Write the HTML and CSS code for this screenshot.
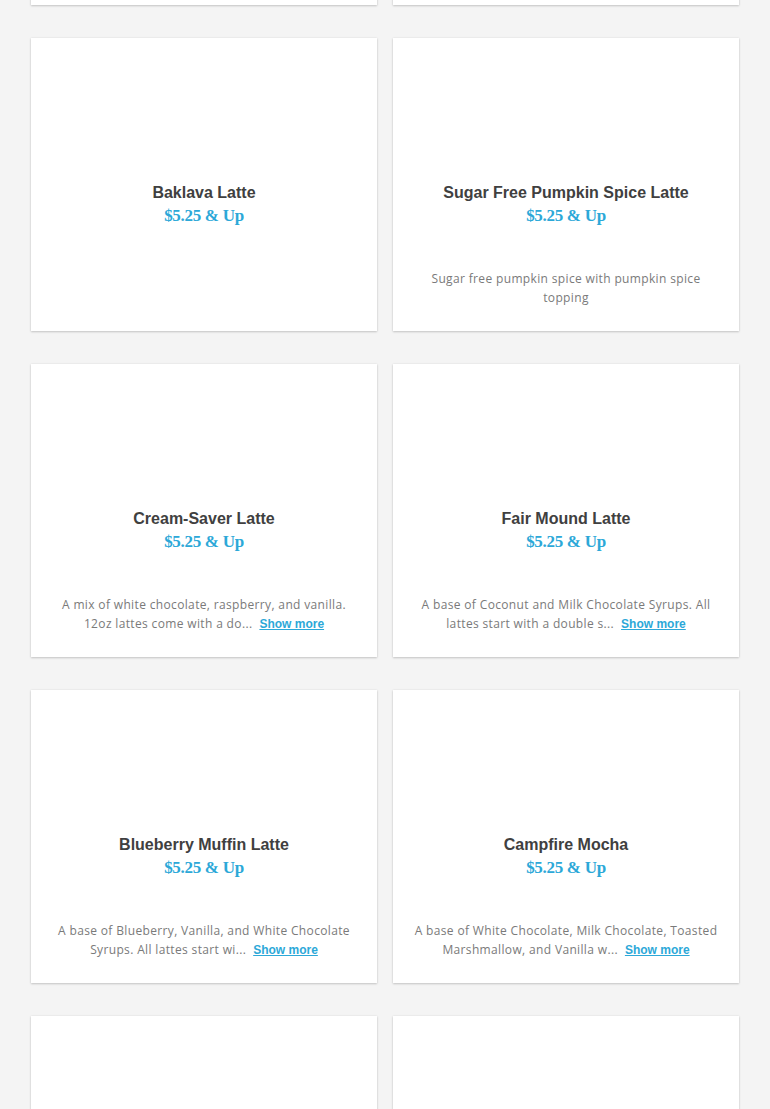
FILE: index.html
```html
<!DOCTYPE html>
<html lang="en">
<head>
  <meta charset="UTF-8" />
  <meta name="viewport" content="width=device-width, initial-scale=1.0" />
  <title>Lattes</title>
  <link rel="stylesheet" href="styles.css">
</head>
<body>
  <div class="menu">
    <div class="item"></div>
    <div class="item"></div>

    <div class="item">
      <div class="photo"></div>
      <h3 class="name">Baklava Latte</h3>
      <div class="price">$5.25 &amp; Up</div>
    </div>
    <div class="item">
      <div class="photo"></div>
      <h3 class="name">Sugar Free Pumpkin Spice Latte</h3>
      <div class="price">$5.25 &amp; Up</div>
      <p class="desc">Sugar free pumpkin spice with pumpkin spice topping</p>
    </div>

    <div class="item">
      <div class="photo"></div>
      <h3 class="name">Cream-Saver Latte</h3>
      <div class="price">$5.25 &amp; Up</div>
      <p class="desc">A mix of white chocolate, raspberry, and vanilla. 12oz lattes come with a do...<a href="#" class="more">Show more</a></p>
    </div>
    <div class="item">
      <div class="photo"></div>
      <h3 class="name">Fair Mound Latte</h3>
      <div class="price">$5.25 &amp; Up</div>
      <p class="desc">A base of Coconut and Milk Chocolate Syrups. All lattes start with a double s...<a href="#" class="more">Show more</a></p>
    </div>

    <div class="item">
      <div class="photo"></div>
      <h3 class="name">Blueberry Muffin Latte</h3>
      <div class="price">$5.25 &amp; Up</div>
      <p class="desc">A base of Blueberry, Vanilla, and White Chocolate Syrups. All lattes start wi...<a href="#" class="more">Show more</a></p>
    </div>
    <div class="item">
      <div class="photo"></div>
      <h3 class="name">Campfire Mocha</h3>
      <div class="price">$5.25 &amp; Up</div>
      <p class="desc">A base of White Chocolate, Milk Chocolate, Toasted Marshmallow, and Vanilla w...<a href="#" class="more">Show more</a></p>
    </div>

    <div class="item"></div>
    <div class="item"></div>
  </div>
</body>
</html>
```

FILE: styles.css
```css
body {
  margin: 0;
  background-color: #f4f4f4;
  font-family: "Open Sans", sans-serif;
}
.menu {
  display: grid;
  grid-template-columns: 346px 346px;
  grid-auto-rows: 293px;
  column-gap: 16px;
  row-gap: 33px;
  justify-content: center;
  margin-top: -288px;
}
.item {
  background: #fff;
  box-shadow: 0 1px 2px rgba(0, 0, 0, 0.18), 0 0 2px rgba(0, 0, 0, 0.08);
  padding: 0 16px;
  text-align: center;
  overflow: hidden;
}
.photo {
  height: 145px;
}
.name {
  margin: 0;
  font-family: "Liberation Sans", Arial, sans-serif;
  font-size: 16px;
  line-height: 20px;
  font-weight: bold;
  color: #404040;
}
.price {
  margin-top: 1px;
  font-family: "Liberation Serif", serif;
  font-weight: bold;
  font-size: 17px;
  line-height: 24px;
  letter-spacing: -0.3px;
  color: #2ca8d8;
}
.desc {
  margin: 41px 0 0;
  font-size: 12px;
  line-height: 19px;
  letter-spacing: 0.35px;
  color: #7a7a7a;
}
.more {
  margin-left: 7px;
  font-family: "Liberation Sans", Arial, sans-serif;
  font-weight: bold;
  letter-spacing: 0;
  color: #2ca8d8;
}
```
